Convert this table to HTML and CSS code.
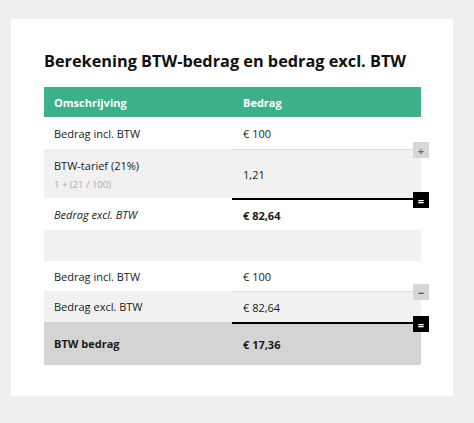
FILE: index.html
```html
<!DOCTYPE html>
<html lang="nl">
<head>
<meta charset="utf-8">
<title>Berekening BTW</title>
<link rel="stylesheet" href="styles.css">
</head>
<body>
<div class="page">
  <div class="card">
    <h1 class="title">Berekening BTW-bedrag en bedrag excl. BTW</h1>
    <div class="table">
      <div class="row head">
        <div class="cell">Omschrijving</div>
        <div class="cell">Bedrag</div>
      </div>
      <div class="row r1">
        <div class="cell">Bedrag incl. BTW</div>
        <div class="cell">€ 100</div>
      </div>
      <div class="row alt tall">
        <div class="cell stack">
          <span>BTW-tarief (21%)</span>
          <span class="note">1 + (21 / 100)</span>
        </div>
        <div class="cell val thin">1,21<span class="badge op">÷</span></div>
      </div>
      <div class="row r3">
        <div class="cell it">Bedrag excl. BTW</div>
        <div class="cell val bold thick">€ 82,64<span class="badge eq">=</span></div>
      </div>
      <div class="row alt spacer">
        <div class="cell"></div>
        <div class="cell"></div>
      </div>
      <div class="row r5">
        <div class="cell">Bedrag incl. BTW</div>
        <div class="cell">€ 100</div>
      </div>
      <div class="row alt r6">
        <div class="cell">Bedrag excl. BTW</div>
        <div class="cell val thin">€ 82,64<span class="badge op minus">−</span></div>
      </div>
      <div class="row total">
        <div class="cell bold">BTW bedrag</div>
        <div class="cell val bold thick">€ 17,36<span class="badge eq">=</span></div>
      </div>
    </div>
  </div>
</div>
</body>
</html>
```
FILE: styles.css
```css
html, body {
  margin: 0;
  padding: 0;
}
body {
  background: #efefef;
  font-family: "Open Sans", "Liberation Sans", sans-serif;
  color: #1a1a1a;
  width: 474px;
  height: 423px;
  overflow: hidden;
}
.page {
  padding: 19px 21px 0 11px;
}
.card {
  background: #fff;
  width: 442px;
  height: 377px;
  box-sizing: border-box;
  padding: 31px 32px 0 33px;
}
.title {
  margin: 0 0 14px;
  font-size: 16.3px;
  font-weight: 700;
  line-height: 23px;
  color: #111;
  white-space: nowrap;
}
.table {
  width: 377px;
}
.row {
  display: grid;
  grid-template-columns: 188px 189px;
  height: 31px;
  font-size: 11px;
}
.cell {
  padding-left: 10px;
  display: flex;
  align-items: center;
  position: relative;
}
.cell + .cell {
  padding-left: 11px;
}
.head {
  background: #3daf8a;
  color: #fff;
  font-weight: 700;
  height: 30px;
}
.r1 { height: 31px; padding-top: 1px; }
.tall { height: 49px; }
.r3 { height: 32px; }
.spacer { height: 31px; }
.r5 { height: 30px; }
.r6 { height: 31px; }
.alt {
  background: #f1f1f1;
}
.stack {
  flex-direction: column;
  align-items: flex-start;
  justify-content: center;
  gap: 5px;
  padding-top: 2px;
}
.note {
  color: #aaa;
  font-size: 9.5px;
}
.it {
  font-style: italic;
}
.bold {
  font-weight: 700;
}
.total {
  background: #d4d4d4;
  height: 43px;
}
.val.thin {
  border-top: 1px solid #dedede;
}
.val.thick {
  border-top: 2px solid #000;
}
.badge {
  position: absolute;
  right: -8px;
  width: 16px;
  height: 16px;
  display: flex;
  align-items: center;
  justify-content: center;
  font-size: 11px;
  line-height: 1;
}
.thin .badge {
  top: -8px;
}
.thick .badge {
  top: -8px;
}
.op {
  background: #d6d6d6;
  color: #666;
  font-weight: 700;
}
.minus {
  color: #555;
}
.eq {
  background: #000;
  color: #fff;
  font-weight: 700;
}
```
